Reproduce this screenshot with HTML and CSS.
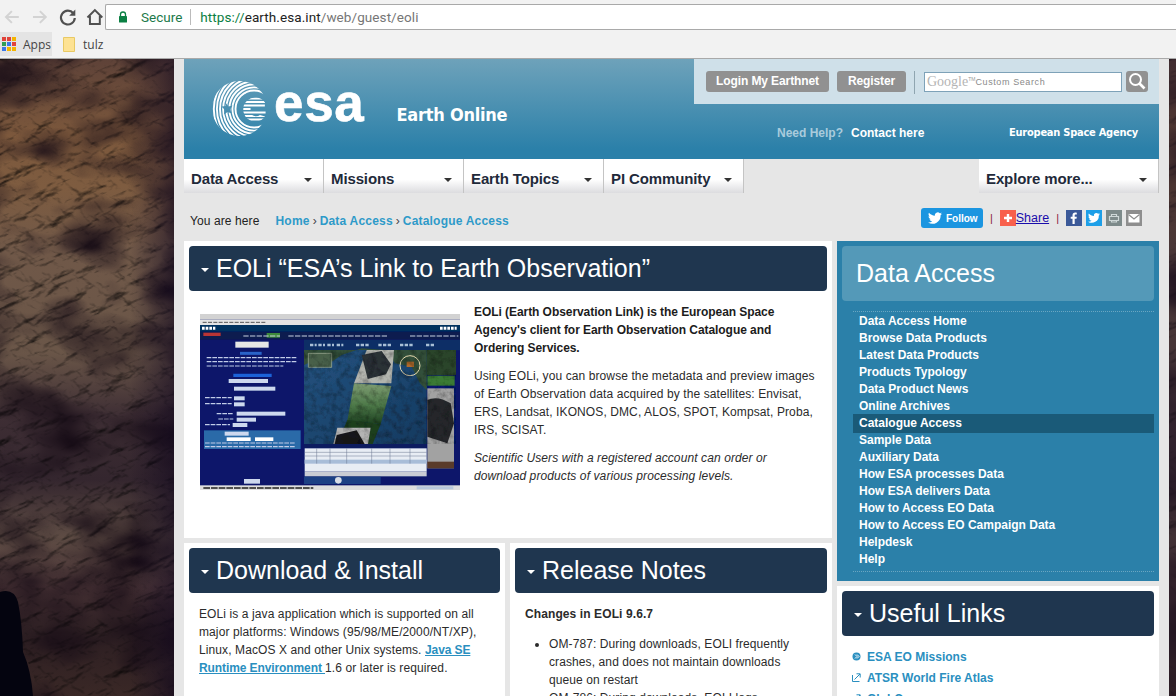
FILE: index.html
```html
<!DOCTYPE html>
<html lang="en">
<head>
<meta charset="utf-8">
<title>EOLi - Earth Online</title>
<link rel="stylesheet" href="styles.css">
</head>
<body>
<header class="chrome">
  <div class="toolbar">
    <div class="nav-icons">
      <svg class="ticon" viewBox="0 0 20 20"><path d="M17 10H4M10 4l-6 6 6 6" fill="none" stroke="#d3d3d3" stroke-width="2"/></svg>
      <svg class="ticon" viewBox="0 0 20 20"><path d="M3 10h13M10 4l6 6-6 6" fill="none" stroke="#d3d3d3" stroke-width="2"/></svg>
      <svg class="ticon" viewBox="0 0 20 20"><path d="M15.5 6.200A7 7 0 1 0 17 11" fill="none" stroke="#505050" stroke-width="2.200"/><path d="M17.500 2.500v6.200h-6.200z" fill="#505050"/></svg>
      <svg class="ticon" viewBox="0 0 20 20"><path d="M2.500 10.500 10 3l7.500 7.500M5 9v8h10V9" fill="none" stroke="#505050" stroke-width="2"/></svg>
    </div>
    <div class="omnibox">
      <svg class="lock" viewBox="0 0 10 12"><path d="M2.500 5V3.500a2.500 2.500 0 0 1 5 0V5" fill="none" stroke="#0b8043" stroke-width="1.300"/><rect x="1" y="5" width="8" height="6.500" rx=".6" fill="#0b8043"/></svg>
      <span class="secure">Secure</span>
      <span class="omni-sep"></span>
      <span class="url"><span class="scheme">https://</span><span class="host">earth.esa.int</span><span class="path">/web/guest/eoli</span></span>
    </div>
  </div>
  <div class="bookmarks">
    <div class="bm bm-apps">
      <span class="apps-grid"><i class="r"></i><i class="r"></i><i class="y"></i><i class="g"></i><i class="b"></i><i class="r"></i><i class="b"></i><i class="y"></i><i class="y"></i></span>
      <span>Apps</span>
    </div>
    <div class="bm">
      <svg class="folder" viewBox="0 0 12 15"><path d="M.5.500h11v14H.5z" fill="#fde293" stroke="#e8c964"/></svg>
      <span>tulz</span>
    </div>
  </div>
</header>

<svg class="terrain" viewBox="0 0 1176 637" preserveAspectRatio="none" aria-hidden="true">
  <defs>
    <linearGradient id="tone" x1="0" y1="0" x2="0" y2="1">
      <stop offset="0" stop-color="#5e4238"/>
      <stop offset=".12" stop-color="#7c583c"/>
      <stop offset=".2" stop-color="#7e5c40"/>
      <stop offset=".3" stop-color="#705848"/>
      <stop offset=".46" stop-color="#6a5648"/>
      <stop offset=".56" stop-color="#3e2e34"/>
      <stop offset=".66" stop-color="#34262e"/>
      <stop offset=".75" stop-color="#5e4c44"/>
      <stop offset=".83" stop-color="#4c3638"/>
      <stop offset=".9" stop-color="#2c1e22"/>
      <stop offset="1" stop-color="#3a2826"/>
    </linearGradient>
    <filter id="ridgeA" x="0" y="0" width="100%" height="100%" color-interpolation-filters="sRGB">
      <feTurbulence type="fractalNoise" baseFrequency=".026 .07" numOctaves="6" seed="7"/>
      <feDiffuseLighting surfaceScale="3.500" diffuseConstant="1.450" lighting-color="#fff">
        <feDistantLight azimuth="255" elevation="50"/>
      </feDiffuseLighting>
    </filter>
    <filter id="ridgeB" x="0" y="0" width="100%" height="100%" color-interpolation-filters="sRGB">
      <feTurbulence type="fractalNoise" baseFrequency=".06 .1" numOctaves="5" seed="23"/>
      <feDiffuseLighting surfaceScale="1.800" diffuseConstant="1.350" lighting-color="#fff">
        <feDistantLight azimuth="285" elevation="55"/>
      </feDiffuseLighting>
    </filter>
    <filter id="blotch" x="0" y="0" width="100%" height="100%" color-interpolation-filters="sRGB">
      <feTurbulence type="fractalNoise" baseFrequency=".012 .02" numOctaves="3" seed="4"/>
      <feColorMatrix type="matrix" values="0 0 0 0 .08  0 0 0 0 .04  0 0 0 0 .08  2.200 0 0 0 -.9"/>
    </filter>
    <linearGradient id="edge" x1="0" x2="1"><stop offset="0" stop-color="#140a20" stop-opacity="0"/><stop offset="1" stop-color="#140a20" stop-opacity=".6"/></linearGradient>
  </defs>
  <rect width="1176" height="637" fill="url(#tone)"/>
  <g class="mult"><rect x="-200" y="-200" width="1600" height="1100" transform="rotate(-22)" filter="url(#ridgeA)"/></g>
  <g class="mult"><rect x="-200" y="-200" width="1600" height="1100" transform="rotate(24)" filter="url(#ridgeB)"/></g>
  <rect width="1176" height="637" filter="url(#blotch)"/>
  <rect x="130" width="44" height="637" fill="url(#edge)"/>
  <rect x="1168" width="8" height="637" fill="#2a1c2a" opacity=".55"/>
  <path d="M0 533q14-4 18 10 4 20 5 50 8 18 10 44H0z" fill="#04040f"/>
</svg>

<div class="page">
  <section class="masthead">
    <div class="brand">
      <svg class="logo" viewBox="0 0 55 55" aria-hidden="true">
        <defs>
          <mask id="crescent">
            <circle cx="27.500" cy="27.500" r="27.500" fill="#fff"/>
            <circle cx="42" cy="28" r="17" fill="#000"/>
            <path d="M13 21l3.500 4.500 4-1-2.500 4 2 4-4.500-1.500-3.500 2.500.5-5-3-3 4.500-.5z" fill="#000"/>
          </mask>
          <clipPath id="globe"><path d="M53 21.500a12 12 0 1 0 0 14l-5-1.500a7 7 0 0 1-9-1h14.600v-3h-14.800a7 7 0 0 1 0-4h14z"/></clipPath>
        </defs>
        <g mask="url(#crescent)" fill="none" stroke="#fff" stroke-width="1.900">
          <circle cx="42" cy="28" r="18.500"/><circle cx="42" cy="28" r="21.600"/><circle cx="42" cy="28" r="24.700"/>
          <circle cx="42" cy="28" r="27.800"/><circle cx="42" cy="28" r="30.900"/><circle cx="42" cy="28" r="34"/>
          <circle cx="42" cy="28" r="37.100"/><circle cx="42" cy="28" r="40.200"/><circle cx="42" cy="28" r="43.300"/><circle cx="42" cy="28" r="46.400"/>
        </g>
        <g clip-path="url(#globe)" stroke="#fff" stroke-width="1.800">
          <path d="M28 17.500h27M28 21h27M28 24.500h27M28 28h27M28 31.500h27M28 35h27M28 38.500h27"/>
        </g>
      </svg>
      <span class="esa">esa</span>
      <span class="site">Earth Online</span>
    </div>
    <div class="mast-right">
      <div class="login-bar">
        <a class="gbtn gbtn-login">Login My Earthnet</a>
        <a class="gbtn gbtn-reg">Register</a>
        <span class="vsep"></span>
        <div class="search-input"><span class="google">Google</span><sup class="tm">TM</sup><span class="custom">Custom Search</span></div>
        <button class="search-btn" aria-label="Search"><svg viewBox="0 0 18 18" width="18" height="18"><circle cx="7.500" cy="7.500" r="5.500" fill="none" stroke="#fff" stroke-width="2"/><path d="M11.500 11.500l5 5" stroke="#fff" stroke-width="2.600"/></svg></button>
      </div>
      <div class="help-row">
        <span class="need">Need Help?</span>
        <a class="contact">Contact here</a>
        <span class="agency">European Space Agency</span>
      </div>
    </div>
  </section>

  <nav class="mainnav">
    <a class="tab">Data Access<i class="caret"></i></a>
    <a class="tab">Missions<i class="caret"></i></a>
    <a class="tab">Earth Topics<i class="caret"></i></a>
    <a class="tab">PI Community<i class="caret"></i></a>
    <span class="nav-gap"></span>
    <a class="tab tab-more">Explore more...<i class="caret"></i></a>
  </nav>

  <div class="crumbs">
    <div class="trail"><span class="here">You are here</span><a>Home</a><b>›</b><a>Data Access</a><b>›</b><a>Catalogue Access</a></div>
    <div class="social">
      <a class="follow"><svg viewBox="0 0 16 13" width="14" height="12"><path d="M16 1.500c-.6.300-1.200.4-1.900.5.700-.4 1.200-1 1.400-1.800-.6.400-1.300.6-2 .8A3.300 3.300 0 0 0 7.900 4C5.200 3.900 2.800 2.600 1.100.6c-.9 1.500-.4 3.400 1 4.400-.5 0-1-.2-1.500-.4 0 1.600 1.100 3 2.600 3.300-.5.100-1 .1-1.500 0 .4 1.300 1.600 2.200 3.100 2.300A6.600 6.600 0 0 1 0 11.500 9.300 9.300 0 0 0 14.400 3.200c.6-.4 1.200-1 1.600-1.700z" fill="#fff"/></svg>Follow</a>
      <span class="pipe">|</span>
      <span class="plus"><svg viewBox="0 0 16 16" width="16" height="16"><path d="M8 4v8M4 8h8" stroke="#fff" stroke-width="2.400"/></svg></span><a class="share">Share</a>
      <span class="pipe">|</span>
      <span class="sq sq-fb"><svg viewBox="0 0 16 16" width="16" height="16"><path d="M8.700 14V8.800h1.800l.3-2.100H8.700V5.500c0-.6.200-1 1-1h1.100V2.700c-.5-.1-1-.1-1.600-.1-1.600 0-2.700 1-2.700 2.800v1.300H4.700v2.100h1.800V14z" fill="#fff"/></svg></span>
      <span class="sq sq-tw"><svg viewBox="0 0 16 16" width="16" height="16"><path transform="translate(2 3) scale(.75)" d="M16 1.500c-.6.300-1.200.4-1.900.5.700-.4 1.200-1 1.400-1.800-.6.400-1.300.6-2 .8A3.300 3.300 0 0 0 7.900 4C5.200 3.900 2.800 2.600 1.100.6c-.9 1.500-.4 3.400 1 4.400-.5 0-1-.2-1.500-.4 0 1.600 1.100 3 2.600 3.300-.5.100-1 .1-1.500 0 .4 1.300 1.600 2.200 3.100 2.300A6.600 6.600 0 0 1 0 11.500 9.300 9.300 0 0 0 14.400 3.200c.6-.4 1.200-1 1.600-1.700z" fill="#fff"/></svg></span>
      <span class="sq sq-pr"><svg viewBox="0 0 16 16" width="16" height="16"><path d="M3.500 6.500h9v4h-9zM5.500 6.500V4.500h5v2M5.500 10v2h5v-2" fill="none" stroke="#cfd8d8" stroke-width="1.200"/></svg></span>
      <span class="sq sq-ml"><svg viewBox="0 0 16 16" width="16" height="16"><path d="M2.500 4h11v8.500h-11z" fill="#fff"/><path d="M2.500 4.500 8 9l5.500-4.500" fill="none" stroke="#8e8e8e" stroke-width="1.200"/></svg></span>
    </div>
  </div>

  <div class="columns">
    <main class="col-main">
      <article class="panel panel-eoli">
        <h1 class="bar"><i class="bar-caret"></i>EOLi “ESA’s Link to Earth Observation”</h1>
        <div class="eoli-body">
          <svg class="shot" viewBox="30 27 780 528" role="img" aria-label="EOLi application screenshot">
            <defs>
              <filter id="soft" x="0" y="0" width="100%" height="100%"><feGaussianBlur stdDeviation="2"/></filter>
              <filter id="grain" x="0" y="0" width="100%" height="100%"><feTurbulence type="fractalNoise" baseFrequency=".05" numOctaves="4" seed="3"/><feColorMatrix type="matrix" values="0 0 0 0 0  0 0 0 0 0  0 0 0 0 0  2.400 0 0 0 -1"/></filter>
              <linearGradient id="sea" x1="0" x2="1" y1="0" y2="1"><stop offset="0" stop-color="#24527f"/><stop offset="1" stop-color="#143a60"/></linearGradient>
              <linearGradient id="swath" x1="0" x2="0" y1="0" y2="1"><stop offset="0" stop-color="#7e9c72"/><stop offset=".55" stop-color="#4c7848"/><stop offset="1" stop-color="#1d4020"/></linearGradient>
            </defs>
            <g filter="url(#soft)">
              <rect x="30" y="27" width="780" height="528" fill="#07166a"/>
              <rect x="30" y="27" width="780" height="17" fill="#d2d2d2"/>
              <rect x="30" y="44" width="780" height="16" fill="#e4e4e4"/>
              <rect x="30" y="60" width="780" height="20" fill="#05325e"/>
              <rect x="30" y="80" width="780" height="24" fill="#0a1c50"/>
              <rect x="40" y="83" width="52" height="10" fill="#b83434"/>
              <rect x="230" y="84" width="40" height="14" fill="#3d8a3a"/>
              <rect x="342" y="104" width="468" height="32" fill="#0b2f66"/>
              <rect x="342" y="135" width="368" height="282" fill="url(#sea)"/>
              <path d="M342 135h368v120l-20-20-25-50-50-10-30-40-70-5-60 20-30 20-50-5-33 15z" fill="#33503a"/>
              <path d="M355 145h70v42h-70z" fill="#48604a" stroke="#aab8a0" stroke-width="2"/>
              <path d="M530 135h82l-8 100h-112z" fill="#b2b4ae"/>
              <path d="M515 150l60-12 28 40-15 30-55 14z" fill="#2a3036"/>
              <path d="M492 235l112 8-32 114-100-10z" fill="url(#swath)"/>
              <path d="M472 345l100 12-24 60h-106z" fill="#1d3f1f"/>
              <path d="M442 368h100l-8 49h-104z" fill="#b4b4b4"/>
              <path d="M440 390l60-14 24 41h-90z" fill="#17171a"/>
              <circle cx="660" cy="182" r="30" fill="none" stroke="#e6d9b0" stroke-width="3"/>
              <path d="M650 170h22v16h-22z" fill="#b06a2c"/>
              <rect x="710" y="135" width="88" height="75" fill="#2b452b"/>
              <rect x="712" y="212" width="82" height="30" fill="#3a7a34"/>
              <rect x="712" y="250" width="80" height="240" fill="#a2a2a2"/>
              <path d="M712 285q30-15 70 10l10 60-20 60-60-20z" fill="#26282c"/>
              <rect x="712" y="470" width="80" height="20" fill="#5a3a2c"/>
              <rect x="342" y="417" width="368" height="12" fill="#081a60"/>
              <rect x="344" y="430" width="366" height="70" fill="#e8edf4"/>
              <rect x="344" y="464" width="366" height="12" fill="#a8bdd8"/>
              <path d="M344 442h366M344 453h366M380 430v46M420 430v46M470 430v46M545 430v46M600 430v46M660 430v46" stroke="#6a7790" stroke-width="1.500"/>
              <rect x="344" y="500" width="366" height="14" fill="#c9ccd4"/>
              <rect x="42" y="376" width="290" height="56" fill="#2a6aa8"/>
              <rect x="136" y="110" width="100" height="18" fill="#e6e6e6"/>
              <rect x="116" y="222" width="118" height="12" fill="#cdd8ee"/>
              <rect x="132" y="245" width="124" height="12" fill="#cdd8ee"/>
              <rect x="132" y="274" width="32" height="12" fill="#cdd8ee"/>
              <rect x="132" y="292" width="32" height="12" fill="#cdd8ee"/>
              <rect x="140" y="320" width="146" height="12" fill="#cdd8ee"/>
              <rect x="140" y="338" width="58" height="12" fill="#cdd8ee"/>
              <rect x="128" y="354" width="44" height="12" fill="#cdd8ee"/>
              <rect x="104" y="380" width="72" height="12" fill="#cdd8ee"/>
              <rect x="110" y="397" width="72" height="11" fill="#fff"/>
              <rect x="195" y="397" width="55" height="11" fill="#fff"/>
              <rect x="162" y="522" width="48" height="14" fill="#cdd8ee"/>
              <rect x="342" y="515" width="230" height="22" fill="#2a5f96" opacity=".6"/>
              <circle cx="445" cy="526" r="10" fill="#d8dde6"/>
              <rect x="30" y="541" width="780" height="14" fill="#dedede"/>
              <rect x="680" y="544" width="110" height="9" fill="#b8c8dc"/>
              <path d="M50 158h270M50 170h270M50 183h230M45 278h80M45 296h80M80 326h50M85 342h45M45 359h75M45 414h270M45 425h270" stroke="#c3cce8" stroke-width="3.500" stroke-dasharray="14 3"/>
              <path d="M38 52h190" stroke="#555" stroke-width="3" stroke-dasharray="12 4"/>
              <path d="M40 549h330" stroke="#222" stroke-width="4" stroke-dasharray="20 3"/>
              <path d="M150 145h65" stroke="#2b63c8" stroke-width="9"/>
              <path d="M130 211h115" stroke="#1e62d8" stroke-width="10"/>
              <path d="M360 120h20M385 120h20M412 120h20M440 120h20M498 120h40M565 120h40M630 120h40M708 120h24" stroke="#a9bfd6" stroke-width="8" stroke-dasharray="10 4"/>
              <path d="M160 93h110M295 93h300M660 93h145" stroke="#ccd2e0" stroke-width="3" stroke-dasharray="16 4"/>
              <path d="M36 70h40M750 70h50" stroke="#fff" stroke-width="9" stroke-dasharray="8 3"/>
              <rect x="342" y="135" width="456" height="282" filter="url(#grain)" opacity=".28"/>
            </g>
          </svg>
          <div class="eoli-copy">
            <p class="strong">EOLi (Earth Observation Link) is the European Space Agency's client for Earth Observation Catalogue and Ordering Services.</p>
            <p>Using EOLi, you can browse the metadata and preview images of Earth Observation data acquired by the satellites: Envisat, ERS, Landsat, IKONOS, DMC, ALOS, SPOT, Kompsat, Proba, IRS, SCISAT.</p>
            <p class="em">Scientific Users with a registered account can order or download products of various processing levels.</p>
          </div>
        </div>
      </article>
      <div class="main-pair">
        <article class="panel panel-low">
          <h2 class="bar"><i class="bar-caret"></i>Download &amp; Install</h2>
          <p class="low-copy">EOLi is a java application which is supported on all major platforms: Windows (95/98/ME/2000/NT/XP), Linux, MacOS X and other Unix systems. <a class="java">Java SE Runtime Environment </a>1.6 or later is required.</p>
        </article>
        <article class="panel panel-low">
          <h2 class="bar"><i class="bar-caret"></i>Release Notes</h2>
          <p class="low-copy strong">Changes in EOLi 9.6.7</p>
          <ul class="notes">
            <li>OM-787: During downloads, EOLI frequently crashes, and does not maintain downloads queue on restart</li>
            <li>OM-786: During downloads, EOLI logs some</li>
          </ul>
        </article>
      </div>
    </main>

    <aside class="col-side">
      <div class="sidenav">
        <div class="side-title">Data Access</div>
        <ul class="side-list">
          <li>Data Access Home</li>
          <li>Browse Data Products</li>
          <li>Latest Data Products</li>
          <li>Products Typology</li>
          <li>Data Product News</li>
          <li>Online Archives</li>
          <li class="active">Catalogue Access</li>
          <li>Sample Data</li>
          <li>Auxiliary Data</li>
          <li>How ESA processes Data</li>
          <li>How ESA delivers Data</li>
          <li>How to Access EO Data</li>
          <li>How to Access EO Campaign Data</li>
          <li>Helpdesk</li>
          <li>Help</li>
        </ul>
      </div>
      <div class="panel panel-links">
        <h2 class="bar"><i class="bar-caret"></i>Useful Links</h2>
        <ul class="links">
          <li><svg class="licon" viewBox="0 0 9 9"><circle cx="4.500" cy="4.500" r="4" fill="#2a8fc0"/><path d="M3 2.500l2 2-2 2M5 2.500l2 2-2 2" fill="none" stroke="#fff"/></svg>ESA EO Missions</li>
          <li><svg class="licon" viewBox="0 0 9 9"><path d="M.5 2v6.500H7.500M2.500 6.500 8 1M4.500 .8H8.200V4.500" fill="none" stroke="#2a8fc0"/></svg>ATSR World Fire Atlas</li>
          <li><svg class="licon" viewBox="0 0 9 9"><path d="M.5 2v6.500H7.500M2.500 6.500 8 1M4.500 .8H8.200V4.500" fill="none" stroke="#2a8fc0"/></svg>GlobCover</li>
        </ul>
      </div>
    </aside>
  </div>
</div>
</body>
</html>
```

FILE: styles.css
```css
* { box-sizing: border-box; }
html, body { margin: 0; height: 696px; overflow: hidden; }
body { position: relative; font-family: "Liberation Sans", Arial, sans-serif; font-size: 12px; color: #222; background: #2a1c24; }
h1, h2, p, ul { margin: 0; padding: 0; }
ul { list-style: none; }
a { text-decoration: none; }

.chrome { height: 59px; background: #f2f2f2; border-bottom: 1px solid #a9a9a9; position: relative; z-index: 2; }
.toolbar { height: 32px; display: flex; align-items: center; padding-left: 2px; }
.nav-icons { display: flex; width: 103px; gap: 8px; padding-top: 1px; }
.ticon { width: 20px; height: 20px; }
.omnibox { flex: 1; height: 26px; margin-top: 1px; background: #fff; border: 1px solid #a9a9a9; border-right: 0; border-radius: 2px 0 0 2px; display: flex; align-items: center; padding-left: 12px; font-family: Roboto, "Liberation Sans", sans-serif; font-size: 13.500px; }
.lock { width: 10px; height: 12px; }
.secure { color: #1c7a4a; margin-left: 13px; }
.omni-sep { width: 1px; height: 16px; background: #bbb; margin: 0 9px 0 8px; }
.url { letter-spacing: .08px; }
.scheme { color: #0b8043; }
.host { color: #222; }
.path { color: #767676; }
.bookmarks { height: 26px; display: flex; font-family: "Open Sans", "Liberation Sans", sans-serif; font-size: 12px; color: #444; }
.bm { display: flex; align-items: center; gap: 8px; height: 24px; padding-left: 11px; }
.bm-apps { width: 52px; padding-left: 2px; gap: 7px; background: #e4e4e4; }
.apps-grid { display: grid; grid-template-columns: repeat(3, 4px); gap: 1px; }
.apps-grid i { width: 4px; height: 4px; }
.apps-grid .r { background: #e0433a; }
.apps-grid .y { background: #f4b400; }
.apps-grid .g { background: #2f9e55; }
.apps-grid .b { background: #3b78e7; }
.folder { width: 12px; height: 15px; }

.terrain { position: absolute; left: 0; top: 59px; width: 1176px; height: 637px; z-index: 0; }
.mult { mix-blend-mode: multiply; }

.page { position: relative; z-index: 1; width: 995px; height: 637px; margin-left: 174px; padding: 0 10px; background: #e6e6e6; overflow: hidden; }

.masthead { height: 100px; display: flex; justify-content: space-between; background: linear-gradient(#6ea2ba, #2b80a9 90%); color: #fff; }
.brand { display: flex; align-items: flex-start; padding: 22px 0 0 28px; }
.logo { width: 55px; height: 55px; flex: none; }
.esa { font-size: 53px; font-weight: 700; line-height: 50px; margin: -3px 0 0 7px; letter-spacing: .7px; -webkit-text-stroke: .6px #fff; }
.site { font-family: "DejaVu Sans", sans-serif; font-stretch: condensed; font-weight: 700; font-size: 18px; line-height: 22px; margin: 23px 0 0 32px; letter-spacing: -.25px; white-space: nowrap; }
.mast-right { width: 465px; display: flex; flex-direction: column; }
.login-bar { height: 45px; background: #cfe0e9; display: flex; align-items: flex-start; padding: 12px 0 0 12px; }
.gbtn { height: 21px; line-height: 20px; background: #919191; color: #fff; font-weight: 700; font-size: 12px; border-radius: 3px; text-align: center; letter-spacing: -.1px; }
.gbtn-login { width: 123px; }
.gbtn-reg { width: 69px; margin-left: 8px; }
.vsep { width: 1px; height: 23px; background: #8fa5b0; margin: 0 9px 0 8px; }
.search-input { width: 198px; height: 20px; margin-top: 1px; background: #fff; border: 1px solid #7ea2b8; display: flex; align-items: center; padding-left: 2px; overflow: hidden; }
.google { font-family: "Liberation Serif", serif; font-size: 14px; color: #b5b5b5; }
.tm { font-size: 5px; color: #999; margin: -6px 0 0 0; }
.custom { font-size: 9px; letter-spacing: .6px; color: #8a8a8a; margin-left: 0; }
.search-btn { width: 22px; height: 21px; margin-left: 4px; padding: 1px 2px; background: #919191; border: 0; border-radius: 3px; display: flex; }
.help-row { flex: 1; display: flex; align-items: flex-start; padding-top: 22px; font-weight: 700; font-size: 12px; white-space: nowrap; }
.need { margin-left: 83px; color: #a9cbdc; }
.contact { margin-left: 8px; color: #fff; }
.agency { margin-left: auto; margin-right: 21px; font-family: "DejaVu Sans", sans-serif; font-stretch: condensed; font-size: 11px; letter-spacing: -.25px; }

.mainnav { height: 34px; display: flex; }
.tab { position: relative; width: 140px; height: 34px; padding: 10px 0 0 7px; background: linear-gradient(#fff 50%, #fff 60%, #dcdcdf); border-right: 1px solid #c4c4c4; color: #1f2a3a; font-size: 15px; font-weight: 700; line-height: 20px; display: block; letter-spacing: -.12px; }
.tab-more { width: 180px; }
.nav-gap { flex: 1; background: #e6e6e6; }
.caret { position: absolute; right: 11px; top: 19px; border: 4px solid transparent; border-top-color: #333; border-bottom: 0; }

.crumbs { height: 48px; display: flex; justify-content: space-between; align-items: flex-start; padding: 14px 17px 0 6px; }
.trail { padding-top: 7px; display: flex; align-items: baseline; color: #2e9ac9; }
.here { color: #222; margin-right: 16px; letter-spacing: .1px; }
.trail a { font-weight: 700; color: #2e9ac9; letter-spacing: .2px; }
.trail b { font-weight: 400; color: #444; margin: 0 3px; }
.social { display: flex; align-items: center; height: 22px; }
.follow { width: 62px; height: 20px; background: #1b95e0; border-radius: 3px; color: #fff; font-weight: 700; font-size: 10px; display: flex; align-items: center; gap: 4px; padding-left: 7px; }
.pipe { color: #8a1a3a; margin: 0 7px; font-size: 11px; }
.plus { width: 16px; height: 16px; background: #f8604c; display: block; }
.plus svg, .sq svg { display: block; }
.share { color: #1a0dab; text-decoration: underline; font-size: 12.500px; }
.sq { width: 16px; height: 16px; margin-right: 4px; display: block; }
.sq:last-child { margin-right: 0; }
.sq-fb { background: #3b5998; }
.sq-tw { background: #1d9fe8; }
.sq-pr { background: #7d8a8a; }
.sq-ml { background: #8e8e8e; }

.columns { display: flex; gap: 5px; align-items: flex-start; }
.col-main { width: 648px; display: flex; flex-direction: column; gap: 5px; }
.col-side { width: 322px; display: flex; flex-direction: column; gap: 5px; }
.panel { background: #fff; padding: 5px; }
.bar { height: 45px; background: #1f364f; border-radius: 4px; color: #fff; font-size: 25px; font-weight: 400; line-height: 44px; padding: 0 0 0 12px; display: flex; align-items: center; white-space: nowrap; }
.bar-caret { width: 0; height: 0; border: 4px solid transparent; border-top-color: #fff; border-bottom: 0; margin: 4px 7px 0 0; }
h1.bar { line-height: 43px; padding-bottom: 1px; }
h2.bar { line-height: 43px; padding-bottom: 1px; }

.panel-eoli { height: 297px; }
.eoli-body { display: flex; padding: 12px 0 0 11px; }
.shot { width: 260px; height: 176px; margin-top: 11px; flex: none; display: block; }
.eoli-copy { margin-left: 14px; width: 343px; line-height: 18px; color: #2b2b2b; letter-spacing: .1px; }
.eoli-copy p { margin-bottom: 10px; }
.strong { font-weight: 700; color: #1c1c1c; letter-spacing: -.06px; }
.eoli-copy .strong { letter-spacing: -.06px; }
.em { font-style: italic; }

.main-pair { display: flex; gap: 5px; }
.panel-low { flex: none; height: 160px; }
.panel-low:first-child { width: 321px; }
.panel-low:last-child { width: 322px; }
.low-copy { padding: 12px 5px 0 10px; line-height: 18px; color: #2b2b2b; letter-spacing: .1px; }
.java { color: #2a8fc0; font-weight: 700; text-decoration: underline; letter-spacing: -.1px; }
.notes { list-style: disc; padding: 12px 36px 0 34px; line-height: 18px; color: #2b2b2b; letter-spacing: .1px; }

.sidenav { height: 340px; background: #2b80a9; padding: 5px; }
.side-title { height: 55px; background: #5499b8; border-radius: 4px; color: #fff; font-size: 25px; line-height: 54px; padding-left: 14px; }
.side-list { margin: 10px 0 0 11px; border-top: 1px dotted #6aa6c2; border-bottom: 1px dotted #6aa6c2; padding: 1px 0 4px; height: 261px; color: #fff; font-weight: 700; }
.side-list li { height: 17px; line-height: 17px; padding-left: 6px; }
.side-list .active { background: #1a5a78; height: 19px; line-height: 19px; margin: -1px 0; }
.panel-links { height: 120px; }
.links { padding: 10px 0 0 10px; color: #2a8fc0; font-weight: 700; }
.links li { display: flex; align-items: center; height: 21px; white-space: nowrap; }
.licon { width: 9px; height: 9px; margin-right: 6px; flex: none; }
```
